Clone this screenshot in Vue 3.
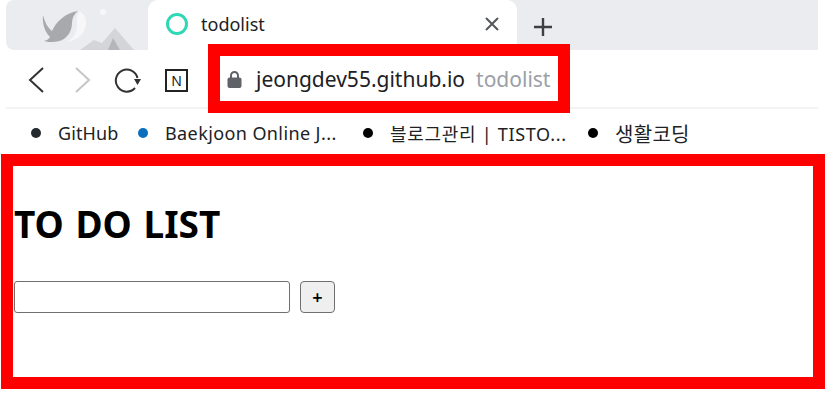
<script setup>
const bookmarks = [
  { name: 'GitHub', dot: '#24292e', width: 107, size: 18, spacing: 0.1 },
  { name: 'Baekjoon Online J...', dot: '#0a6ebd', width: 225, size: 18, spacing: 0.4 },
  { name: '블로그관리 | TISTO...', dot: '#000', width: 225, size: 18, spacing: 0.7 },
  { name: '생활코딩', dot: '#000', width: 110, size: 20, spacing: 0.3 },
]
</script>

<template>
  <div class="shot">
    <div class="tabstrip">
      <svg class="art" width="142" height="50" viewBox="0 0 142 50">
        <path d="M37 15c2 8 5 13 9 16 4-9 13-18 26-20-4 3-6 7-6 12 0 10-7 19-19 19-3 0-6 0-9-1 3-1 5-2 6-4-5-5-8-13-7-22z" fill="#a7a9ad" />
        <path d="M73 11c7 3 9 12 5 20-3 6-10 10-18 11 7-3 11-9 11-17 0-6 0-10 2-14z" fill="#f7f7f9" />
        <circle cx="97" cy="12" r="3" fill="#f8f8fa" />
        <path d="M74 50l14-10 8 3 13-15 19 22z" fill="#d4d5d9" />
        <path d="M102 50l5-12 7 12z" fill="#b4b6bb" />
      </svg>
      <div class="tab">
        <span class="favicon"></span>
        <span class="tab-title">todolist</span>
        <svg class="tab-close" width="16" height="16" viewBox="0 0 16 16">
          <path d="M2 2l12 12M14 2L2 14" stroke="#55585c" stroke-width="2" fill="none" />
        </svg>
      </div>
      <svg class="new-tab" width="20" height="20" viewBox="0 0 20 20">
        <path d="M10 1v18M1 10h18" stroke="#3c4043" stroke-width="2.4" fill="none" />
      </svg>
    </div>

    <div class="toolbar">
      <svg width="18" height="28" viewBox="0 0 18 28">
        <path d="M16 2L3 14l13 12" stroke="#303235" stroke-width="2" fill="none" />
      </svg>
      <svg class="forward" width="18" height="28" viewBox="0 0 18 28">
        <path d="M2 2l13 12L2 26" stroke="#c4c6c9" stroke-width="2" fill="none" />
      </svg>
      <svg class="reload" width="28" height="26" viewBox="0 0 28 26">
        <path d="M23.5 11A11 11 0 1 0 21 21" stroke="#303235" stroke-width="2" fill="none" />
        <path d="M20 12h7l-3.5 6z" fill="#303235" />
      </svg>
      <div class="notion">N</div>
    </div>

    <div class="bookmarks">
      <div
        v-for="b in bookmarks"
        :key="b.name"
        class="bookmark"
        :style="{ width: b.width + 'px', fontSize: b.size + 'px', letterSpacing: b.spacing + 'px' }"
      >
        <span class="dot" :style="{ background: b.dot }"></span>
        <span>{{ b.name }}</span>
      </div>
    </div>

    <div class="page">
      <h1>TO DO LIST</h1>
      <div class="form">
        <input type="text" />
        <button>+</button>
      </div>
    </div>

    <!-- red annotation drawn over the browser chrome -->
    <div class="address">
      <svg width="15" height="19" viewBox="0 0 15 19">
        <path d="M4 8V5.5a3.5 3.5 0 0 1 7 0V8" stroke="#5f6368" stroke-width="2" fill="none" />
        <rect x="0.5" y="7.5" width="14" height="10.5" rx="2" fill="#5f6368" />
      </svg>
      <span class="host">jeongdev55.github.io</span>
      <span class="path">todolist</span>
    </div>
  </div>
</template>

<style scoped>
.shot {
  position: relative;
  width: 825px;
  height: 407px;
  overflow: hidden;
  background: #fff;
  font-family: "Noto Sans", "Noto Sans CJK KR", sans-serif;
  color: #202124;
}

.tabstrip {
  display: flex;
  align-items: center;
  height: 50px;
  margin: 0 7px 0 6px;
  background: #ebecf0;
  border-radius: 8px 0 0 8px;
}

.art {
  flex: none;
}

.tab {
  display: flex;
  align-items: center;
  flex: none;
  width: 369px;
  height: 50px;
  padding: 0 17px 2px 18px;
  box-sizing: border-box;
  background: #fff;
  border-radius: 10px 10px 0 0;
}

.favicon {
  width: 22px;
  height: 22px;
  box-sizing: border-box;
  border: 3px solid #2fd8b5;
  border-radius: 50%;
}

.tab-title {
  flex: 1;
  margin-left: 13px;
  font-size: 18px;
}

.new-tab {
  margin: 3px 0 0 16px;
}

.toolbar {
  display: flex;
  align-items: center;
  height: 59px;
  margin: 0 7px 0 6px;
  padding: 3px 0 0 21px;
  border-bottom: 2px solid #f3f3f4;
  box-sizing: border-box;
}

.forward {
  margin-left: 29px;
}

.reload {
  margin-left: 22px;
}

.notion {
  width: 23px;
  height: 23px;
  margin-left: 23px;
  box-sizing: border-box;
  border: 2px solid #222;
  font-size: 14px;
  line-height: 19px;
  text-align: center;
}

.bookmarks {
  display: flex;
  align-items: center;
  height: 45px;
  padding: 3px 0 0 31px;
  box-sizing: border-box;
}

.bookmark {
  display: flex;
  align-items: center;
  flex: none;
  gap: 17px;
  white-space: nowrap;
}

.dot {
  flex: none;
  width: 10px;
  height: 10px;
  border-radius: 50%;
}

.page {
  width: 824px;
  height: 235px;
  margin-left: 1px;
  padding: 34px 1px 0;
  box-sizing: border-box;
  border: 12px solid #ff0000;
  color: #000;
}

h1 {
  margin: 0;
  font-size: 37px;
  line-height: 48px;
  font-weight: 700;
  word-spacing: 2px;
}

.form {
  display: flex;
  align-items: stretch;
  gap: 10px;
  height: 32px;
  margin-top: 33px;
}

input {
  width: 276px;
  box-sizing: border-box;
  margin: 0;
  padding: 0;
  border: 1.5px solid #707070;
  border-radius: 3px;
  background: #fff;
}

button {
  width: 35px;
  margin: 0;
  padding: 0;
  border: 1.5px solid #707070;
  border-radius: 4px;
  background: #efefef;
  font-family: "Noto Sans", sans-serif;
  font-size: 18px;
  font-weight: 600;
  color: #000;
}

.address {
  position: absolute;
  left: 208px;
  top: 44px;
  display: flex;
  align-items: center;
  width: 362px;
  height: 69px;
  padding: 1px 0 0 7px;
  box-sizing: border-box;
  border: 12px solid #ff0000;
  background: #fff;
  font-size: 21px;
  white-space: nowrap;
}

.host {
  margin-left: 14px;
}

.path {
  margin-left: 11px;
  color: #9aa0a6;
}
</style>
